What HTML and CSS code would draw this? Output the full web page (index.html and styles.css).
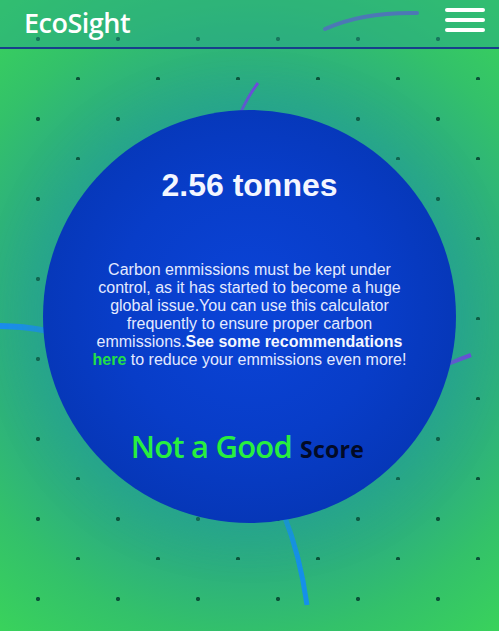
FILE: index.html
```html
<!DOCTYPE html>
<html lang="en">
<head>
<meta charset="utf-8">
<title>EcoSight</title>
<link rel="stylesheet" href="styles.css">
</head>
<body>
<svg class="rings" width="499" height="631" viewBox="0 0 499 631" aria-hidden="true">
  <path d="M325 29 Q362 12 417 13" stroke="#6a55d8" stroke-width="4" fill="none" stroke-linecap="round"/>
  <path d="M258 83 Q248 96 240 114" stroke="#7a3de6" stroke-width="3" fill="none"/>
  <path d="M-2 326 Q22 326 48 331" stroke="#1a8cf0" stroke-width="6" fill="none"/>
  <path d="M448 364 Q460 359 471 355" stroke="#7a3de6" stroke-width="4" fill="none"/>
  <path d="M284 515 Q300 555 307 605" stroke="#1590ea" stroke-width="5" fill="none"/>
</svg>
<header class="topbar">
  <div class="brand">EcoSight</div>
  <button class="menu" type="button" aria-label="Menu"><span></span><span></span><span></span></button>
</header>
<main class="stage">
  <section class="result">
    <h1 class="amount">2.56 tonnes</h1>
    <p class="info">Carbon emmissions must be kept under control, as it has started to become a huge global issue.You can use this calculator frequently to ensure proper carbon emmissions.<b>See some recommendations</b> <a class="link" href="#">here</a> to reduce your emmissions even more!</p>
    <div class="verdict"><span class="verdict-main">Not a Good</span><span class="verdict-sub">Score</span></div>
  </section>
</main>
</body>
</html>
```
FILE: styles.css
```css
html, body {
  margin: 0;
  padding: 0;
}
body {
  position: relative;
  width: 499px;
  height: 631px;
  overflow: hidden;
  font-family: "Liberation Sans", Arial, sans-serif;
  background-color: #2fb57a;
  background-image:
    radial-gradient(circle at 38px 39px, #0b5238 1.8px, transparent 2.4px),
    radial-gradient(circle at 78px 79px, #0b5238 1.8px, transparent 2.4px),
    radial-gradient(circle farthest-corner at 250px 320px, #24a094 0%, #27a48c 45%, #2cae80 60%, #33c16a 78%, #3ad45a 100%);
  background-size: 80px 80px, 80px 80px, 100% 100%;
  background-repeat: repeat, repeat, no-repeat;
}
.rings {
  position: absolute;
  left: 0;
  top: 0;
  z-index: 0;
  pointer-events: none;
}
.topbar {
  position: relative;
  z-index: 2;
  height: 47px;
  border-bottom: 2px solid #173f8c;
  background: rgba(40, 165, 140, 0.45);
  display: flex;
  align-items: center;
  justify-content: space-between;
  padding: 0 14px 0 24px;
}
.brand {
  font-family: "Open Sans", "Noto Sans", sans-serif;
  font-weight: 600;
  font-size: 27px;
  color: #ffffff;
  letter-spacing: -0.5px;
  margin-top: -3px;
}
.menu {
  display: flex;
  flex-direction: column;
  gap: 6px;
  background: none;
  border: 0;
  padding: 0;
  margin-top: -7px;
  cursor: pointer;
}
.menu span {
  display: block;
  width: 40px;
  height: 4px;
  border-radius: 2px;
  background: #ffffff;
}
.stage {
  position: relative;
  z-index: 1;
  padding-top: 61px;
  display: flex;
  justify-content: center;
}
.result {
  width: 413px;
  height: 413px;
  border-radius: 50%;
  background: radial-gradient(circle at 50% 48%, #0b44d8 0%, #083dc8 45%, #0534b0 85%, #0431a6 100%);
  box-shadow: 0 0 40px 12px rgba(36, 160, 150, 0.5);
  display: flex;
  flex-direction: column;
  align-items: center;
  box-sizing: border-box;
  padding-top: 57px;
  text-align: center;
}
.amount {
  margin: 0;
  font-size: 32px;
  line-height: 37px;
  font-weight: 700;
  color: #f3f6ff;
}
.info {
  margin: 57px 0 0;
  width: 320px;
  font-size: 16px;
  line-height: 18px;
  color: #e4eaff;
}
.info b {
  color: #f4f7ff;
}
.link {
  color: #22e046;
  font-weight: 700;
  text-decoration: none;
}
.verdict {
  margin-top: 58px;
  margin-right: 4px;
  font-family: "Open Sans", "Noto Sans", sans-serif;
  line-height: 38px;
}
.verdict-main {
  font-size: 31px;
  font-weight: 600;
  color: #28ef3e;
  letter-spacing: -0.8px;
}
.verdict-sub {
  margin-left: 8px;
  font-size: 23px;
  font-weight: 700;
  color: #020a26;
  letter-spacing: 0.3px;
}
```
